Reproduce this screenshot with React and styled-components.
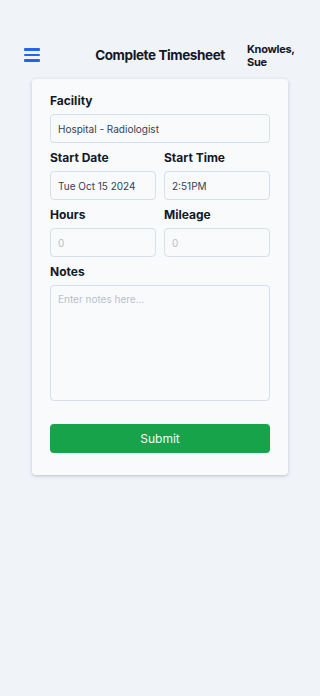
import React from "react";
import styled, { createGlobalStyle } from "styled-components";

const Global = createGlobalStyle`
  html, body { margin: 0; padding: 0; background: #f0f3f8; }
  body { font-family: Inter, "Noto Sans", sans-serif; color: #111827; }
  * { box-sizing: border-box; }
`;

const Page = styled.div`
  min-height: 696px;
  background: #f0f3f8;
  padding-top: 40px;
`;

const Header = styled.header`
  display: grid;
  grid-template-columns: 1fr auto 1fr;
  align-items: center;
  height: 30px;
  padding: 0 24px;
`;

const MenuButton = styled.button`
  width: 16px;
  height: 13.5px;
  padding: 0;
  border: 0;
  background: none;
  display: flex;
  flex-direction: column;
  justify-content: space-between;
`;

const MenuLine = styled.span`
  display: block;
  height: 2.5px;
  width: 16px;
  border-radius: 1px;
  background: #2563eb;
`;

const Title = styled.h1`
  margin: 0;
  text-align: center;
  font-size: 13.5px;
  letter-spacing: -0.4px;
  font-weight: 700;
  color: #111827;
`;

const UserName = styled.div`
  justify-self: end;
  width: 49px;
  margin-top: 2px;
  font-size: 11px;
  letter-spacing: -0.3px;
  font-weight: 700;
  line-height: 13px;
  color: #111827;
`;

const Card = styled.form`
  margin: 9px 32px 0;
  background: #f8fafc;
  border-radius: 4px;
  box-shadow: 0 1px 4px rgba(15, 23, 42, 0.15), 0 1px 2px rgba(15, 23, 42, 0.08);
  padding: 11px 18px 22px;
  display: flex;
  flex-direction: column;
  gap: 4px;
`;

const Row = styled.div`
  display: grid;
  grid-template-columns: 1fr 1fr;
  gap: 8px;
`;

const Field = styled.div`
  display: flex;
  flex-direction: column;
  gap: 4px;
`;

const Label = styled.label`
  font-size: 12px;
  font-weight: 700;
  line-height: 21px;
  margin-bottom: -1px;
  color: #111827;
`;

const Input = styled.input`
  height: 29px;
  width: 100%;
  border: 1px solid #d7dfea;
  border-radius: 4px;
  background: #f8fafc;
  padding: 0 7px;
  font-family: Inter, "Noto Sans", sans-serif;
  font-size: 10px;
  color: #374151;
  outline: none;
  &::placeholder { color: #b8c0cc; }
`;

const TextArea = styled.textarea`
  height: 116px;
  width: 100%;
  border: 1px solid #d7dfea;
  border-radius: 4px;
  background: #f8fafc;
  padding: 7px 7px;
  font-family: Inter, "Noto Sans", sans-serif;
  font-size: 10px;
  resize: none;
  outline: none;
  &::placeholder { color: #b8c0cc; }
`;

const Submit = styled.button`
  margin-top: 19px;
  height: 29px;
  width: 100%;
  border: 0;
  border-radius: 4px;
  background: #16a34a;
  color: #f0fdf4;
  font-family: Inter, "Noto Sans", sans-serif;
  font-size: 12px;
  font-weight: 400;
`;

export default function App() {
  return (
    <Page>
      <Global />
      <Header>
        <MenuButton type="button" aria-label="Menu">
          <MenuLine />
          <MenuLine />
          <MenuLine />
        </MenuButton>
        <Title>Complete Timesheet</Title>
        <UserName>Knowles, Sue</UserName>
      </Header>
      <Card onSubmit={(e) => e.preventDefault()}>
        <Field>
          <Label>Facility</Label>
          <Input defaultValue="Hospital - Radiologist" />
        </Field>
        <Row>
          <Field>
            <Label>Start Date</Label>
            <Input defaultValue="Tue Oct 15 2024" />
          </Field>
          <Field>
            <Label>Start Time</Label>
            <Input defaultValue="2:51PM" />
          </Field>
        </Row>
        <Row>
          <Field>
            <Label>Hours</Label>
            <Input placeholder="0" />
          </Field>
          <Field>
            <Label>Mileage</Label>
            <Input placeholder="0" />
          </Field>
        </Row>
        <Field>
          <Label>Notes</Label>
          <TextArea placeholder="Enter notes here..." />
        </Field>
        <Submit type="submit">Submit</Submit>
      </Card>
    </Page>
  );
}
